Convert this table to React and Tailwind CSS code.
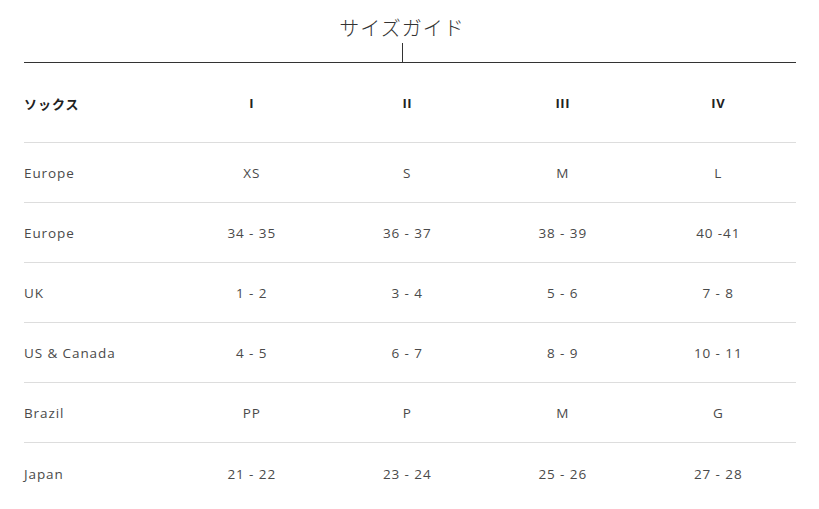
import React from "react";

const header = ["ソックス", "I", "II", "III", "IV"];
const rows = [
  ["Europe", "XS", "S", "M", "L"],
  ["Europe", "34 - 35", "36 - 37", "38 - 39", "40 -41"],
  ["UK", "1 - 2", "3 - 4", "5 - 6", "7 - 8"],
  ["US & Canada", "4 - 5", "6 - 7", "8 - 9", "10 - 11"],
  ["Brazil", "PP", "P", "M", "G"],
  ["Japan", "21 - 22", "23 - 24", "25 - 26", "27 - 28"],
];

export default function App() {
  return (
    <div className="w-[819px] h-[509px] bg-white pl-6 pr-[23px] font-['Open_Sans','Noto_Sans_CJK_JP',sans-serif]">
      <div className="flex flex-col items-center pt-[17px] pr-[16px]">
        <div className="text-[20px] leading-[24px] font-light tracking-[1px] text-[#333] font-['Noto_Sans_CJK_JP',sans-serif] -mt-[1px] mb-[1px]">サイズガイド</div>
        <div className="w-px h-[19px] mt-[2px] bg-[#333]" />
      </div>
      <div className="h-px bg-[#333]" />
      <div className="grid grid-cols-[150px_repeat(4,1fr)] h-[80px] items-center text-[13px] font-bold text-[#222] tracking-[0.5px] border-b border-[#ddd]">
        {header.map((h, i) => (
          <div key={i} className={i === 0 ? "pt-[2px] font-['Noto_Sans_CJK_JP',sans-serif] tracking-[1px]" : "pt-[2px] text-center"}>{h}</div>
        ))}
      </div>
      {rows.map((r, ri) => (
        <div
          key={ri}
          className={`grid grid-cols-[150px_repeat(4,1fr)] h-[60px] items-center text-[13.5px] text-[#4a4a4a] tracking-[0.9px] ${ri < rows.length - 1 ? "border-b border-[#ddd]" : ""}`}
        >
          {r.map((c, ci) => (
            <div key={ci} className={ci === 0 ? "pt-[2px]" : "text-center pt-[2px]"}>{c}</div>
          ))}
        </div>
      ))}
    </div>
  );
}
